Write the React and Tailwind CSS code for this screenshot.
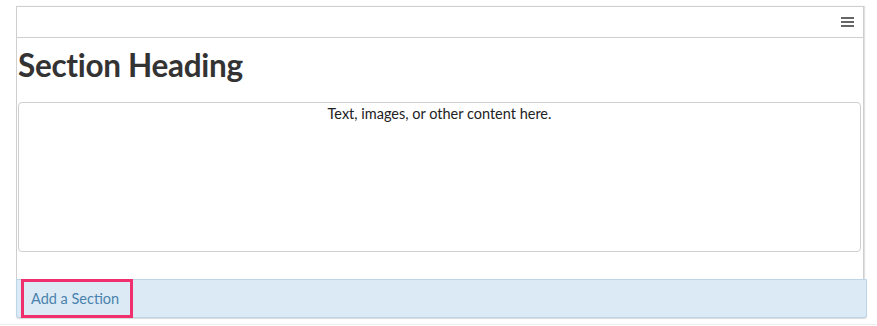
import React from 'react';

export default function App() {
  return (
    <div className="w-[877px] h-[326px] bg-white overflow-hidden font-['Lato','Liberation_Sans',sans-serif] text-[#333]">
      <div className="pl-[16px] pt-[6px]">
        {/* Panel */}
        <div className="w-[848px] border border-b-0 border-[#cfcfcf] shadow-[1px_0_1px_rgba(0,0,0,0.12)]">
          {/* Toolbar */}
          <div className="h-[31px] flex items-center justify-end pr-[9px] border-b border-[#cfcfcf]">
            <div className="flex flex-col gap-[2px]">
              <span className="block w-[13px] h-[2px] bg-[#666]" />
              <span className="block w-[13px] h-[2px] bg-[#666]" />
              <span className="block w-[13px] h-[2px] bg-[#666]" />
            </div>
          </div>

          {/* Body */}
          <div className="pl-px pr-[2px]">
            <h1 className="pt-[9px] pb-[18px] text-[31.5px] leading-[37px] font-bold text-[#333] tracking-[-0.3px]">
              Section Heading
            </h1>
            <div className="h-[150px] border border-[#cfcfcf] rounded-[4px] text-center text-[14.5px] leading-[18px] pt-[2px] text-[#222]">
              Text, images, or other content here.
            </div>
            <div className="h-[28px]" />
          </div>
        </div>

        {/* Add section bar */}
        <div className="-mt-px w-[851px] h-[39px] bg-[#dbeaf5] border border-[#bcd6e8] rounded-b-[3px] shadow-[0_1px_1px_rgba(0,0,0,0.15)] flex items-stretch pl-[4px]">
          <button className="w-[112px] border-[3px] border-[#f0306c] -mt-px -mb-px text-left pl-[7px] text-[14.5px] text-[#4a82ad]">
            Add a Section
          </button>
        </div>
        <div className="mt-[6px] -ml-[16px] w-[877px] h-px bg-[#eeeeee]" />
      </div>
    </div>
  );
}
